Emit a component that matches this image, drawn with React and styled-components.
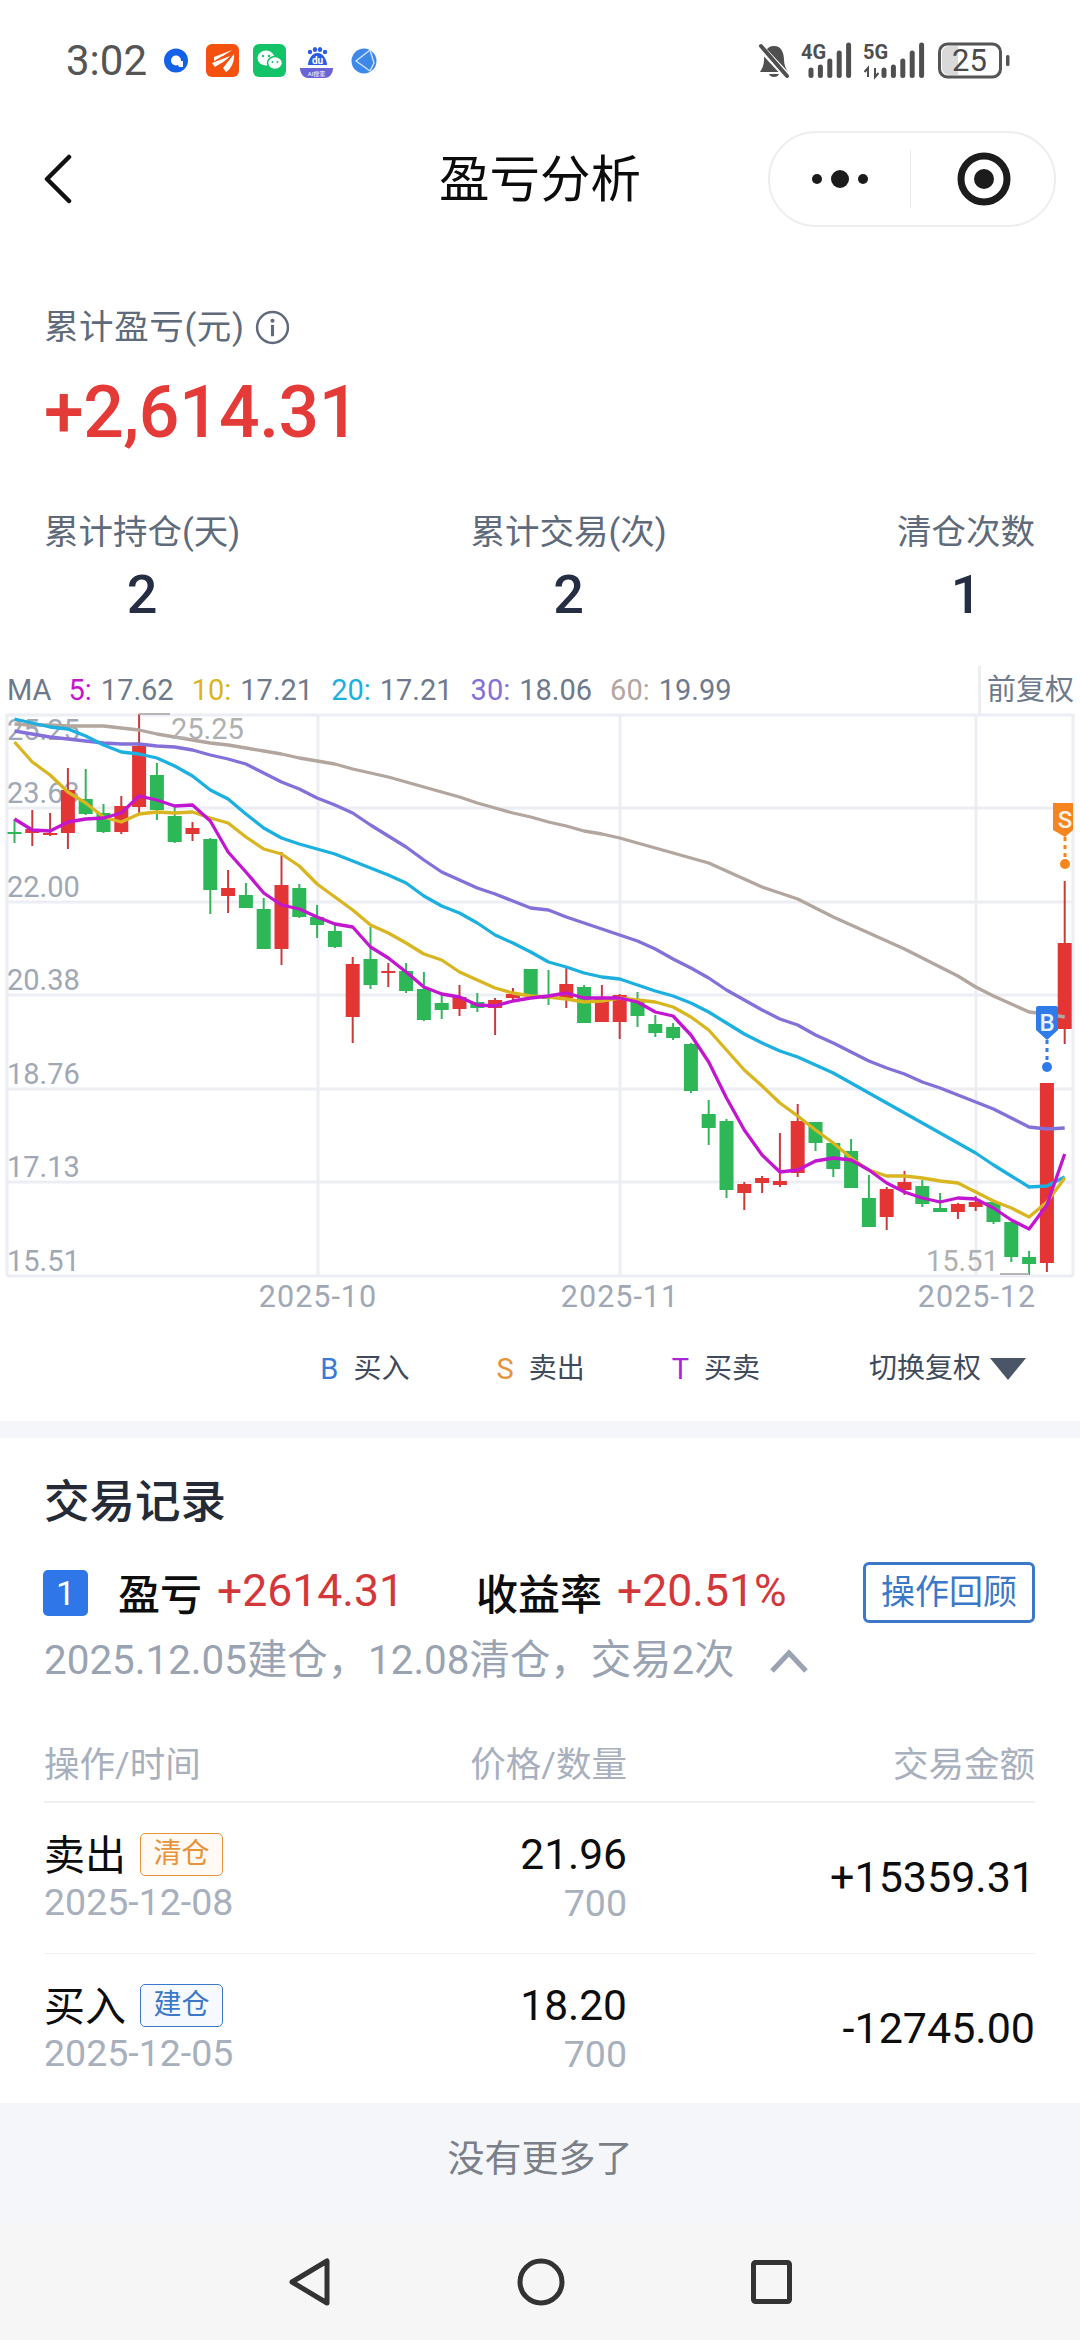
import React from 'react';
import styled, { createGlobalStyle } from 'styled-components';

const GlobalStyle = createGlobalStyle`
  html, body {
    margin: 0;
    padding: 0;
    background: #fff;
    font-family: Roboto, "Noto Sans CJK SC", sans-serif;
  }
  #root { width: 1080px; }
`;

const Page = styled.div`
  width: 1080px;
  height: 2340px;
  overflow: hidden;
  background: #fff;
  color: #111;
`;

const StatusBar = styled.div`
  height: 122px;
  display: flex;
  align-items: center;
  justify-content: space-between;
  padding: 0 70px 0 66px;
  box-sizing: border-box;
`;

const StatusLeft = styled.div`
  display: flex;
  align-items: center;
`;

const Clock = styled.span`
  font-size: 42px;
  line-height: 50px;
  color: #555;
  margin-right: 17px;
`;

const NavBar = styled.div`
  height: 114px;
  display: grid;
  grid-template-columns: minmax(0, 1fr) auto minmax(0, 1fr);
  align-items: center;
  padding: 0 24px;
`;

const BackIcon = styled.svg`
  margin-left: 19px;
`;

const Title = styled.div`
  padding-top: 2px;
  font-size: 50.5px;
  line-height: 60px;
  color: #0c0c0c;
`;

const Capsule = styled.div`
  justify-self: end;
  width: 288px;
  height: 96px;
  box-sizing: border-box;
  border: 2px solid #eeeeee;
  border-radius: 48px;
  display: flex;
  align-items: center;
`;

const CapsuleCell = styled.div`
  flex: 1;
  height: 58px;
  display: flex;
  align-items: center;
  justify-content: center;
  & + & {
    border-left: 1px solid #e8e8e8;
    padding-left: 4px;
  }
`;

const Summary = styled.section`
  padding: 68px 45px 0 44px;
`;

const SummaryLabel = styled.div`
  display: flex;
  align-items: center;
  gap: 10px;
  font-size: 34.5px;
  line-height: 46px;
  color: #5f6a7a;
`;

const LabelText = styled.span`
  letter-spacing: 0.6px;
`;

const BigValue = styled.div`
  margin-top: 21px;
  font-size: 71.5px;
  line-height: 84px;
  font-weight: 500;
  letter-spacing: -0.5px;
  color: #e43a38;
`;

const Stats = styled.div`
  margin-top: 54px;
  display: flex;
  justify-content: space-between;
`;

const Stat = styled.div`
  text-align: center;
`;

const StatLabel = styled.div`
  font-size: 34.5px;
  line-height: 46px;
  color: #5f6a7a;
`;

const StatValue = styled.div`
  margin-top: 10px;
  font-size: 54px;
  line-height: 60px;
  font-weight: 500;
  color: #252e42;
`;

const MaHead = styled.div`
  margin-top: 41px;
  height: 48px;
  display: flex;
  align-items: center;
  padding-left: 7px;
  font-size: 29px;
  color: #6e7a8c;
`;

const MaName = styled.span`
  margin-right: 17px;
`;

const MaItem = styled.span`
  margin-right: 18px;
  display: inline-flex;
  gap: 9px;
`;

const MaKey = styled.span`
  color: ${p => p.$color};
`;

const AdjustLabel = styled.div`
  margin-left: auto;
  height: 48px;
  width: 102px;
  flex: none;
  box-sizing: border-box;
  border-left: 3px solid #eceef4;
  padding-left: 6px;
  line-height: 48px;
  font-size: 29px;
  white-space: nowrap;
  color: #6e7a8c;
`;

const ChartSvg = styled.svg`
  display: block;
  width: 1080px;
  height: 606px;
  overflow: visible;
`;

const AxisText = styled.text`
  font-family: Roboto, sans-serif;
  font-size: 29px;
  fill: ${p => p.$color || '#a0a8b6'};
`;

const DateText = styled(AxisText)`
  font-size: 30.5px;
  letter-spacing: 1px;
`;

const MarkerText = styled.text`
  font-family: Roboto, sans-serif;
  font-size: 24px;
  font-weight: 500;
  fill: ${p => p.$color};
`;

const Legend = styled.div`
  height: 101px;
  box-sizing: border-box;
  padding: 0 54px 3px 0;
  display: flex;
  align-items: center;
  justify-content: flex-end;
`;

const LegendItem = styled.div`
  display: flex;
  align-items: center;
  gap: 15px;
  margin-right: 87px;
  font-size: 28px;
  line-height: 40px;
  color: #3f4a5c;
  &:nth-child(3) { margin-right: 109px; }
`;

const LegendKey = styled.span`
  color: ${p => p.$color};
  font-size: 29px;
  line-height: 40px;
`;

const SwitchLabel = styled.div`
  display: flex;
  align-items: center;
  gap: 9px;
  font-size: 28px;
  line-height: 40px;
  color: #3f4a5c;
`;

const Triangle = styled.span`
  width: 0;
  height: 0;
  border-left: 18px solid transparent;
  border-right: 18px solid transparent;
  border-top: 22px solid #4a5568;
`;

const Gap = styled.div`
  height: 17px;
  background: #f4f6fa;
`;

const Records = styled.section`
  padding: 35px 45px 0 44px;
  background: #fff;
`;

const RecordsTitle = styled.div`
  font-size: 45.5px;
  line-height: 60px;
  font-weight: 500;
  color: #252b36;
`;

const TradeRow = styled.div`
  margin-top: 29px;
  height: 61px;
  box-sizing: border-box;
  padding-bottom: 3px;
  display: flex;
  align-items: center;
  font-size: 42px;
  font-weight: 500;
  color: #0d0d0d;
`;

const IndexBadge = styled.span`
  width: 45px;
  height: 46px;
  margin: 3px 30px 0 -1px;
  background: #2f76e8;
  border-radius: 5px;
  color: #fff;
  font-size: 34px;
  font-weight: 400;
  line-height: 46px;
  text-align: center;
`;

const Profit = styled.span`
  margin: 0 72px 0 15px;
  color: #d4373a;
  font-size: 44.5px;
  font-weight: 400;
  &:last-of-type { margin-right: 0; }
`;

const ReviewButton = styled.div`
  margin-left: auto;
  align-self: flex-start;
  flex: none;
  width: 172px;
  height: 61px;
  box-sizing: border-box;
  border: 3px solid #3b78c8;
  border-radius: 6px;
  color: #3b78c8;
  font-size: 34px;
  font-weight: 400;
  line-height: 55px;
  text-align: center;
`;

const TradeMeta = styled.div`
  margin-top: 13px;
  display: flex;
  align-items: center;
  gap: 34px;
  font-size: 40.4px;
  line-height: 50px;
  color: #9aa3b2;
`;

const TableHead = styled.div`
  margin-top: 59px;
  padding-bottom: 16px;
  display: grid;
  grid-template-columns: 341px 242px 1fr;
  font-size: 35.5px;
  line-height: 40px;
  color: #a8afbd;
  border-bottom: 2px solid #eef0f3;
  & > div + div { text-align: right; }
`;

const TableRow = styled.div`
  height: 150px;
  box-sizing: border-box;
  padding-top: 26px;
  display: grid;
  grid-template-columns: 341px 242px 1fr;
  & + & { border-top: 1px solid #f1f2f5; }
`;

const OpLine = styled.div`
  display: flex;
  align-items: center;
  height: 50px;
  font-size: 41px;
  color: #0d0d0d;
`;

const OpName = styled.span`
  margin-top: -4px;
`;

const Tag = styled.span`
  width: 83px;
  height: 43px;
  box-sizing: border-box;
  margin-left: 14px;
  border: 1.5px solid ${p => p.$color};
  border-radius: 5px;
  background: ${p => p.$bg};
  color: ${p => p.$color};
  font-size: 28px;
  line-height: 40px;
  text-align: center;
`;

const SubLine = styled.div`
  height: 46px;
  font-size: 37.5px;
  line-height: 46px;
  color: #a8afbd;
`;

const PriceCell = styled.div`
  text-align: right;
`;

const Price = styled.div`
  height: 50px;
  padding-top: 1px;
  font-size: 42.5px;
  line-height: 50px;
  color: #0d0d0d;
`;

const Amount = styled.div`
  text-align: right;
  font-size: 43px;
  line-height: 50px;
  color: #0d0d0d;
  margin-top: 23px;
`;

const Footer = styled.div`
  height: 121px;
  box-sizing: border-box;
  padding-bottom: 16px;
  display: flex;
  align-items: center;
  justify-content: center;
  background: #f4f6fa;
  font-size: 37px;
  color: #7a7f88;
`;

const SystemNav = styled.div`
  height: 116px;
  background: #f6f6f6;
  display: flex;
  align-items: center;
  justify-content: center;
  gap: 186px;
`;

// [color, high, body top, body bottom, low] in page pixels
const candles = [
  ['g', 819, 832, 834, 843], ['r', 810, 829, 833, 846], ['r', 813, 833, 835, 836], ['r', 768, 790, 833, 849],
  ['g', 769, 799, 814, 815], ['g', 804, 813, 832, 833], ['r', 796, 806, 832, 834], ['r', 714, 746, 807, 813],
  ['g', 763, 775, 810, 820], ['g', 807, 816, 842, 843], ['r', 822, 828, 834, 841], ['g', 838, 839, 890, 914],
  ['r', 870, 888, 896, 913], ['g', 883, 895, 908, 908], ['g', 898, 909, 949, 949], ['r', 852, 885, 949, 965],
  ['g', 884, 888, 917, 918], ['g', 905, 917, 925, 938], ['g', 925, 931, 947, 948], ['r', 957, 964, 1017, 1043],
  ['g', 927, 959, 985, 989], ['r', 963, 971, 973, 987], ['g', 963, 971, 991, 993], ['g', 972, 989, 1020, 1021],
  ['g', 995, 1003, 1010, 1019], ['r', 985, 997, 1009, 1016], ['g', 993, 1002, 1008, 1012], ['r', 998, 1000, 1008, 1035],
  ['r', 988, 994, 998, 1001], ['g', 969, 969, 995, 996], ['g', 970, 995, 999, 1005], ['r', 967, 984, 998, 1008],
  ['g', 985, 987, 1023, 1023], ['r', 985, 997, 1022, 1022], ['r', 994, 995, 1022, 1039], ['g', 992, 1002, 1016, 1027],
  ['g', 1015, 1024, 1033, 1037], ['g', 1023, 1027, 1038, 1040], ['g', 1043, 1044, 1091, 1093], ['g', 1100, 1114, 1128, 1145],
  ['g', 1119, 1121, 1190, 1198], ['r', 1182, 1184, 1193, 1210], ['r', 1176, 1178, 1183, 1193], ['r', 1133, 1181, 1185, 1187],
  ['r', 1104, 1121, 1173, 1177], ['g', 1122, 1122, 1143, 1151], ['g', 1143, 1143, 1169, 1177], ['g', 1139, 1151, 1188, 1188],
  ['g', 1175, 1198, 1227, 1227], ['r', 1187, 1189, 1217, 1230], ['r', 1171, 1182, 1190, 1195], ['g', 1180, 1186, 1204, 1207],
  ['g', 1193, 1208, 1212, 1212], ['r', 1203, 1204, 1212, 1219], ['r', 1196, 1202, 1207, 1211], ['g', 1201, 1202, 1222, 1224],
  ['g', 1222, 1222, 1257, 1262], ['g', 1251, 1257, 1264, 1275], ['r', 1083, 1083, 1263, 1272], ['r', 881, 943, 1029, 1044],
];

const ma5 = [819, 830, 831, 822, 819, 818, 813, 796, 800, 806, 805, 821, 852, 872, 893, 905, 909, 917, 924, 927, 947, 958, 972, 987, 994, 997, 1005, 1006, 1001, 998, 996, 993, 998, 998, 998, 1002, 1012, 1016, 1035, 1062, 1098, 1130, 1155, 1172, 1170, 1161, 1158, 1160, 1170, 1183, 1192, 1198, 1202, 1198, 1199, 1208, 1220, 1229, 1205, 1154];
const ma10 = [742, 762, 775, 792, 803, 817, 822, 814, 812, 813, 812, 818, 823, 837, 849, 854, 866, 884, 897, 910, 925, 933, 943, 954, 960, 972, 980, 988, 993, 996, 997, 999, 1002, 1001, 998, 1000, 1002, 1007, 1017, 1030, 1050, 1070, 1086, 1103, 1116, 1130, 1143, 1158, 1170, 1176, 1176, 1178, 1181, 1183, 1192, 1201, 1208, 1217, 1202, 1178];
const ma20 = [719, 723, 727, 729, 736, 745, 752, 754, 758, 766, 776, 790, 799, 814, 828, 838, 844, 849, 854, 861, 868, 875, 883, 896, 906, 913, 923, 935, 943, 952, 962, 967, 973, 977, 979, 985, 991, 996, 1003, 1012, 1023, 1034, 1043, 1051, 1057, 1065, 1073, 1083, 1093, 1103, 1113, 1123, 1133, 1143, 1153, 1165, 1176, 1187, 1186, 1177];
const ma30 = [731, 734, 737, 739, 741, 743, 744, 744, 746, 747, 750, 755, 759, 764, 773, 782, 789, 798, 805, 813, 825, 836, 847, 860, 872, 880, 888, 894, 901, 908, 910, 917, 923, 929, 935, 941, 949, 959, 968, 978, 990, 1000, 1010, 1019, 1025, 1035, 1043, 1052, 1061, 1068, 1074, 1082, 1088, 1095, 1102, 1109, 1118, 1127, 1129, 1128];
const ma60 = [724, 725, 725, 726, 726, 726, 728, 730, 734, 737, 740, 743, 745, 748, 751, 754, 758, 761, 764, 769, 773, 777, 782, 787, 792, 797, 803, 808, 813, 817, 822, 826, 831, 834, 838, 843, 848, 853, 858, 863, 871, 879, 887, 893, 899, 908, 917, 925, 933, 941, 949, 958, 967, 976, 987, 996, 1004, 1012, 1014, 1017];

const candleX = i => 14.5 + 17.8 * i;
const toPoints = ys => ys.map((y, i) => `${candleX(i).toFixed(1)},${y}`).join(' ');

const RED = '#e43535';
const GREEN = '#2db757';
const GRID = '#eceef4';

const gridY = [714, 807, 901, 994, 1088, 1181, 1275];
const gridX = [7, 318, 620, 976, 1073];
const yLabels = [['25.25', 740], ['23.63', 803], ['22.00', 897], ['20.38', 990], ['18.76', 1084], ['17.13', 1177], ['15.51', 1271]];
const xLabels = [['2025-10', 318], ['2025-11', 620], ['2025-12', 977]];
const maLines = [[ma60, '#b3a69f'], [ma30, '#8470d8'], [ma20, '#1cb0e0'], [ma10, '#d9b51f'], [ma5, '#c216d0']];

function KlineChart() {
  return (
    <ChartSvg viewBox="0 714 1080 606">
      {gridY.map(y => <line key={y} x1="7" x2="1073" y1={y + 1} y2={y + 1} stroke={GRID} strokeWidth="3" />)}
      {gridX.map(x => <line key={x} x1={x} x2={x} y1="714" y2="1276" stroke={GRID} strokeWidth="3" />)}
      {yLabels.map(([t, y]) => <AxisText key={t} x="7" y={y}>{t}</AxisText>)}
      {xLabels.map(([t, x]) => <DateText key={t} x={x} y="1307" textAnchor="middle">{t}</DateText>)}

      {candles.map(([c, high, top, bottom, low], i) => {
        const x = candleX(i);
        const fill = c === 'r' ? RED : GREEN;
        return (
          <g key={i}>
            <line x1={x} x2={x} y1={high} y2={low} stroke={c === 'r' ? '#c63c3c' : '#34b55c'} strokeWidth="2" />
            <rect x={x - 7} y={top} width="14" height={Math.max(bottom - top, 2)} fill={fill} />
          </g>
        );
      })}

      {maLines.map(([ys, color]) => (
        <polyline key={color} points={toPoints(ys)} fill="none" stroke={color} strokeWidth="3.3" strokeLinejoin="round" />
      ))}

      <line x1="139" x2="170" y1="714" y2="714" stroke="#b5b5b5" strokeWidth="2" />
      <AxisText x="171" y="739" $color="#b0b0b0">25.25</AxisText>
      <line x1="1000" x2="1029" y1="1274" y2="1274" stroke="#b5b5b5" strokeWidth="2" />
      <AxisText x="926" y="1271" $color="#b0b0b0">15.51</AxisText>

      <line x1="1047" x2="1047" y1="1040" y2="1062" stroke="#2f7bea" strokeWidth="3" strokeDasharray="4 4" />
      <circle cx="1047" cy="1067" r="5" fill="#2f7bea" />
      <path d="M1038 1006 H1056 a2 2 0 0 1 2 2 V1030 L1047 1040 L1036 1030 V1008 a2 2 0 0 1 2 -2 Z" fill="#2f7bea" />
      <MarkerText x="1047" y="1031" textAnchor="middle" $color="#e8f1ff">B</MarkerText>

      <line x1="1065" x2="1065" y1="837" y2="858" stroke="#f5861f" strokeWidth="3" strokeDasharray="4 4" />
      <circle cx="1065" cy="864" r="5" fill="#f5861f" />
      <path d="M1053 803 H1073 V830 L1065 837 L1053 830 Z" fill="#f5861f" />
      <MarkerText x="1065" y="828" textAnchor="middle" $color="#fff3e6">S</MarkerText>
    </ChartSvg>
  );
}

function NotifyIcons() {
  return (
    <svg width="222" height="36" viewBox="165 44 222 36" style={{ display: 'block' }}>
      <circle cx="177" cy="61.5" r="8.5" fill="none" stroke="#1560e8" strokeWidth="7" />
      <path d="M177 62 h7 v6 h-4 z" fill="#fff" />

      <rect x="207" y="45" width="33" height="33" rx="6" fill="#f4500f" />
      <path d="M215 58 L233 51 C229 54 222 58 215 62 Z" fill="#fff" />
      <path d="M213 64 L231 57 C228 61 221 65 216 68 Z" fill="#fff" />
      <path d="M224 69 L235 55 C236 62 232 70 227 73 Z" fill="#fff" />

      <rect x="254" y="45" width="33" height="33" rx="6" fill="#12c467" />
      <ellipse cx="267" cy="59" rx="8.5" ry="7.5" fill="#fff" />
      <ellipse cx="276" cy="64" rx="7.5" ry="6.5" fill="#fff" stroke="#12c467" strokeWidth="1.5" />
      <circle cx="264" cy="57" r="1.2" fill="#12c467" />
      <circle cx="270" cy="57" r="1.2" fill="#12c467" />
      <circle cx="273.5" cy="63" r="1" fill="#12c467" />
      <circle cx="278.5" cy="63" r="1" fill="#12c467" />

      <circle cx="311" cy="53" r="2.2" fill="#2b5ce8" />
      <ellipse cx="316" cy="50.5" rx="2.2" ry="2.6" fill="#2b5ce8" />
      <ellipse cx="321" cy="50.5" rx="2.2" ry="2.6" fill="#2b5ce8" />
      <circle cx="326" cy="53" r="2.2" fill="#2b5ce8" />
      <path d="M318.5 54 C325 54 328 62 328 66 H309 C309 62 312 54 318.5 54 Z" fill="#2b5ce8" />
      <text x="318.5" y="65" textAnchor="middle" fontFamily="Roboto" fontSize="10" fontWeight="700" fill="#fff">du</text>
      <path d="M301 69 H334 C334 75 330 79 326 79 H309 C305 79 301 75 301 69 Z" fill="#6a63d8" />
      <text x="317.5" y="77" textAnchor="middle" fontFamily="Roboto, Noto Sans CJK SC" fontSize="6" fill="#fff">AI搜索</text>

      <circle cx="365" cy="62" r="12.5" fill="#3d88e8" />
      <path d="M371 51 L357 62 L371 72 M371 51 L375 64 L371 72" fill="none" stroke="#cfe2fa" strokeWidth="1.4" />
    </svg>
  );
}

function SignalBars({ x }) {
  const tops = [68, 65, 59, 51, 43];
  return tops.map((top, i) => (
    <line key={i} x1={x + i * 9.4} x2={x + i * 9.4} y1={top + 2} y2="75.5" stroke="#4f4f4f" strokeWidth="5" strokeLinecap="round" />
  ));
}

function SystemIcons() {
  return (
    <svg width="252" height="50" viewBox="757 36 252 50" style={{ display: 'block' }}>
      <path d="M773 46 C765 46 763 54 763 60 C763 65 761 69 759 72 H787 C785 69 783 65 783 60 C783 54 781 46 773 46 Z" fill="#4f4f4f" />
      <path d="M768 74 H778 C777 78 769 78 768 74 Z" fill="#4f4f4f" />
      <line x1="759" y1="47" x2="787" y2="77" stroke="#fff" strokeWidth="7" />
      <line x1="760" y1="46" x2="786" y2="76" stroke="#4f4f4f" strokeWidth="4" strokeLinecap="round" />

      <text x="800" y="59" fontFamily="Roboto" fontSize="20" fontWeight="700" fill="#4f4f4f">4G</text>
      <SignalBars x={810} />

      <text x="862" y="59" fontFamily="Roboto" fontSize="20" fontWeight="700" fill="#4f4f4f">5G</text>
      <path d="M867 77 V68 l-3.5 4 M874 68 V77 l3.5 -4" fill="none" stroke="#4f4f4f" strokeWidth="2" />
      <SignalBars x={883} />

      <rect x="938.5" y="44" width="61" height="33" rx="8" fill="#fff" stroke="#555" strokeWidth="3" />
      <path d="M948 46 H957 V75 H948 C944 75 941 72 941 68 V53 C941 49 944 46 948 46 Z" fill="#d9d9d9" />
      <text x="968.5" y="71" textAnchor="middle" fontFamily="Roboto" fontSize="31" fill="#4a4a4a">25</text>
      <rect x="1005" y="55" width="3.5" height="11" rx="1.5" fill="#555" />
    </svg>
  );
}

const maItems = [
  ['5:', '17.62', '#c216d0'],
  ['10:', '17.21', '#d9b51f'],
  ['20:', '17.21', '#1cb0e0'],
  ['30:', '18.06', '#8470d8'],
  ['60:', '19.99', '#b3a69f'],
];

const trades = [
  { op: '卖出', tag: '清仓', color: '#e8923a', bg: '#fffaf3', date: '2025-12-08', price: '21.96', qty: '700', amount: '+15359.31' },
  { op: '买入', tag: '建仓', color: '#3b78c8', bg: '#f6faff', date: '2025-12-05', price: '18.20', qty: '700', amount: '-12745.00' },
];

export default function App() {
  return (
    <Page>
      <GlobalStyle />
      <StatusBar>
        <StatusLeft>
          <Clock>3:02</Clock>
          <NotifyIcons />
        </StatusLeft>
        <SystemIcons />
      </StatusBar>

      <NavBar>
        <BackIcon width="30" height="50" viewBox="0 0 30 50">
          <path d="M26 3 L4 25 L26 47" fill="none" stroke="#111" strokeWidth="4.5" strokeLinecap="round" strokeLinejoin="round" />
        </BackIcon>
        <Title>盈亏分析</Title>
        <Capsule>
          <CapsuleCell>
            <svg width="56" height="20" viewBox="0 0 56 20">
              <circle cx="5" cy="10" r="5" fill="#1c1c1c" />
              <circle cx="28" cy="10" r="9" fill="#1c1c1c" />
              <circle cx="51" cy="10" r="5" fill="#1c1c1c" />
            </svg>
          </CapsuleCell>
          <CapsuleCell>
            <svg width="54" height="54" viewBox="0 0 54 54">
              <circle cx="27" cy="27" r="23" fill="none" stroke="#1c1c1c" strokeWidth="7" />
              <circle cx="27" cy="27" r="10" fill="#1c1c1c" />
            </svg>
          </CapsuleCell>
        </Capsule>
      </NavBar>

      <Summary>
        <SummaryLabel>
          <LabelText>累计盈亏(元)</LabelText>
          <svg width="35" height="35" viewBox="0 0 34 34">
            <circle cx="17" cy="17" r="15" fill="none" stroke="#5f6a7a" strokeWidth="2.4" />
            <circle cx="17" cy="10.5" r="2" fill="#5f6a7a" />
            <rect x="15.5" y="14.5" width="3" height="11" fill="#5f6a7a" />
          </svg>
        </SummaryLabel>
        <BigValue>+2,614.31</BigValue>
        <Stats>
          <Stat><StatLabel>累计持仓(天)</StatLabel><StatValue>2</StatValue></Stat>
          <Stat><StatLabel>累计交易(次)</StatLabel><StatValue>2</StatValue></Stat>
          <Stat><StatLabel>清仓次数</StatLabel><StatValue>1</StatValue></Stat>
        </Stats>
      </Summary>

      <MaHead>
        <MaName>MA</MaName>
        {maItems.map(([key, val, color]) => (
          <MaItem key={key}><MaKey $color={color}>{key}</MaKey>{val}</MaItem>
        ))}
        <AdjustLabel>前复权</AdjustLabel>
      </MaHead>

      <KlineChart />

      <Legend>
        <LegendItem><LegendKey $color="#3b7bd8">B</LegendKey>买入</LegendItem>
        <LegendItem><LegendKey $color="#e8923a">S</LegendKey>卖出</LegendItem>
        <LegendItem><LegendKey $color="#a626d8">T</LegendKey>买卖</LegendItem>
        <SwitchLabel>切换复权<Triangle /></SwitchLabel>
      </Legend>

      <Gap />

      <Records>
        <RecordsTitle>交易记录</RecordsTitle>
        <TradeRow>
          <IndexBadge>1</IndexBadge>
          盈亏<Profit>+2614.31</Profit>
          收益率<Profit>+20.51%</Profit>
          <ReviewButton>操作回顾</ReviewButton>
        </TradeRow>
        <TradeMeta>
          <span>2025.12.05建仓，12.08清仓，交易2次</span>
          <svg width="40" height="24" viewBox="0 0 40 24">
            <path d="M3 22 L20 4 L37 22" fill="none" stroke="#9aa3b2" strokeWidth="5" />
          </svg>
        </TradeMeta>
        <TableHead>
          <div>操作/时间</div>
          <div>价格/数量</div>
          <div>交易金额</div>
        </TableHead>
        {trades.map(t => (
          <TableRow key={t.date}>
            <div>
              <OpLine><OpName>{t.op}</OpName><Tag $color={t.color} $bg={t.bg}>{t.tag}</Tag></OpLine>
              <SubLine>{t.date}</SubLine>
            </div>
            <PriceCell>
              <Price>{t.price}</Price>
              <SubLine>{t.qty}</SubLine>
            </PriceCell>
            <Amount>{t.amount}</Amount>
          </TableRow>
        ))}
      </Records>

      <Footer>没有更多了</Footer>

      <SystemNav>
        <svg width="42" height="48" viewBox="0 0 42 48">
          <path d="M38 3 V45 L3 24 Z" fill="none" stroke="#333" strokeWidth="5" strokeLinejoin="round" />
        </svg>
        <svg width="48" height="48" viewBox="0 0 48 48">
          <circle cx="24" cy="24" r="21" fill="none" stroke="#333" strokeWidth="5" />
        </svg>
        <svg width="41" height="44" viewBox="0 0 41 44">
          <rect x="2.5" y="2.5" width="36" height="39" rx="2" fill="none" stroke="#333" strokeWidth="5" />
        </svg>
      </SystemNav>
    </Page>
  );
}
